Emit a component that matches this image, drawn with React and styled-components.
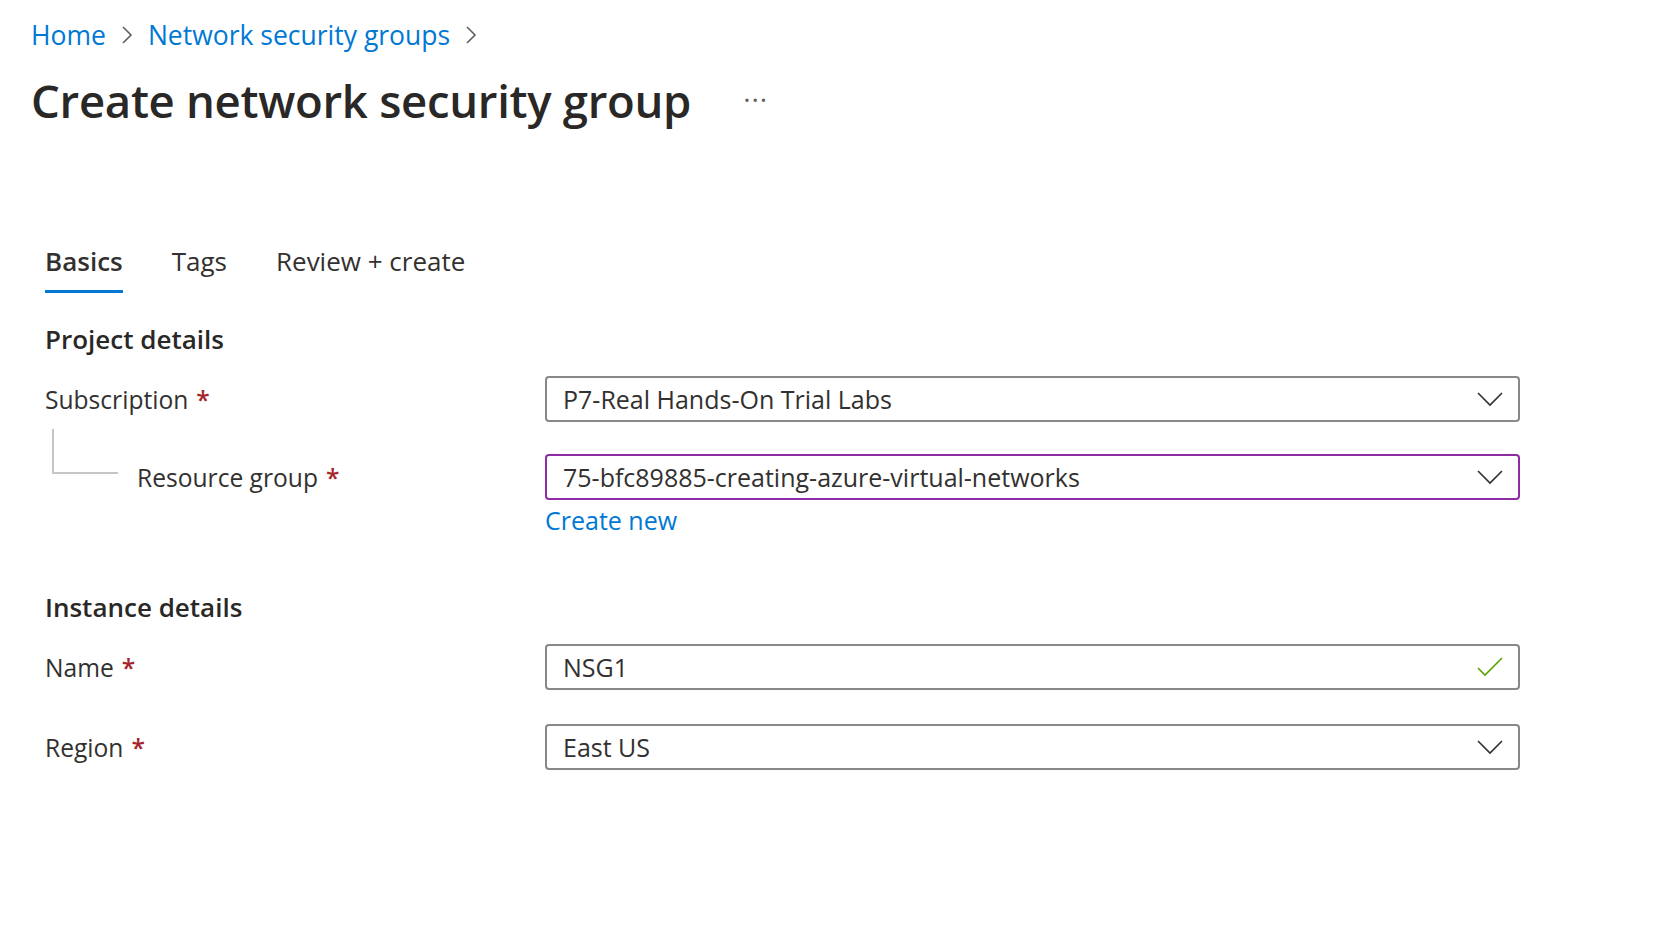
import React from "react";
import styled, { createGlobalStyle } from "styled-components";

const GlobalStyle = createGlobalStyle`
  html, body {
    margin: 0;
    padding: 0;
    background: #ffffff;
  }
  body {
    font-family: "Open Sans", "Noto Sans", sans-serif;
    color: #323130;
  }
`;

const Page = styled.div`
  padding: 17px 0 0 31px;
  width: 1661px;
  height: 934px;
  box-sizing: border-box;
`;

const Breadcrumb = styled.nav`
  display: flex;
  align-items: center;
  gap: 15px;
  height: 36px;
  font-size: 26.5px;
  line-height: 36px;
`;

const Crumb = styled.a`
  color: #0078d4;
  text-decoration: none;
`;

const Chevron = styled.svg`
  width: 12px;
  height: 20px;
  fill: none;
  stroke: #605e5c;
  stroke-width: 1.6;
`;

const TitleRow = styled.div`
  display: flex;
  align-items: center;
  margin-top: 19px;
  height: 56px;
`;

const Title = styled.h1`
  margin: 0;
  font-size: 45.5px;
  font-weight: 600;
  line-height: 56px;
  color: #292827;
  letter-spacing: -0.3px;
`;

const More = styled.span`
  margin-left: 52px;
  font-size: 28px;
  color: #605e5c;
  letter-spacing: 1px;
  margin-top: -2px;
`;

const Form = styled.div`
  padding-left: 14px;
`;

const Tabs = styled.div`
  display: flex;
  gap: 49px;
  margin-top: 115px;
`;

const Tab = styled.div`
  font-size: 26px;
  line-height: 36px;
  padding-bottom: 11px;
  font-weight: ${p => (p.active ? 600 : 400)};
  color: #323130;
  border-bottom: 3px solid ${p => (p.active ? "#0078d4" : "transparent")};
`;

const Section = styled.h2`
  margin: ${p => p.top}px 0 0;
  font-size: 26px;
  font-weight: 600;
  line-height: 36px;
  color: #292827;
`;

const Row = styled.div`
  display: flex;
  align-items: center;
  margin-top: ${p => p.top}px;
`;

const LabelCell = styled.div`
  width: 500px;
  display: flex;
  align-items: center;
  font-size: 24.6px;
  color: #323130;
  padding-left: ${p => p.indent || 0}px;
  box-sizing: border-box;
`;

const Connector = styled.div`
  align-self: flex-start;
  margin-top: -32px;
  width: 64px;
  height: 43px;
  border-left: 2px solid #c8c6c4;
  border-bottom: 2px solid #c8c6c4;
  margin-right: 19px;
`;

const Star = styled.span`
  color: #a4262c;
  margin-left: 8px;
  font-weight: 600;
`;

const Field = styled.div`
  width: 975px;
  height: 46px;
  box-sizing: border-box;
  border: 2px solid ${p => p.border || "#8a8886"};
  border-radius: 4px;
  display: flex;
  align-items: center;
  justify-content: space-between;
  padding: 0 14px 0 16px;
  font-size: 25px;
  color: #323130;
`;

const LinkRow = styled.div`
  margin-left: 500px;
  margin-top: 5px;
  font-size: 25px;
  line-height: 30px;
  color: #0078d4;
`;

const IconSvg = styled.svg`
  width: 28px;
  height: 16px;
  fill: none;
  stroke: ${p => p.color || "#323130"};
  stroke-width: 1.6;
`;

const ChevronRight = () => (
  <Chevron viewBox="0 0 12 20">
    <path d="M2 2 L10 10 L2 18" />
  </Chevron>
);

const DropIcon = () => (
  <IconSvg viewBox="0 0 28 16">
    <path d="M2 2 L14 14 L26 2" />
  </IconSvg>
);

const CheckIcon = () => (
  <IconSvg viewBox="0 0 28 22" color="#57a300" style={{ height: 22 }}>
    <path d="M2 12 L9 19 L26 2" />
  </IconSvg>
);

const App = () => {
  return (
    <>
      <GlobalStyle />
      <Page>
        <Breadcrumb>
          <Crumb>Home</Crumb>
          <ChevronRight />
          <Crumb>Network security groups</Crumb>
          <ChevronRight />
        </Breadcrumb>
        <TitleRow>
          <Title>Create network security group</Title>
          <More>···</More>
        </TitleRow>
        <Form>
          <Tabs>
            <Tab active>Basics</Tab>
            <Tab>Tags</Tab>
            <Tab>Review + create</Tab>
          </Tabs>

          <Section top={28}>Project details</Section>
          <Row top={19}>
            <LabelCell>
              Subscription<Star>*</Star>
            </LabelCell>
            <Field>
              P7-Real Hands-On Trial Labs
              <DropIcon />
            </Field>
          </Row>
          <Row top={32}>
            <LabelCell indent={7}>
              <Connector />
              Resource group<Star>*</Star>
            </LabelCell>
            <Field border="#8e2ca6">
              75-bfc89885-creating-azure-virtual-networks
              <DropIcon />
            </Field>
          </Row>
          <LinkRow>Create new</LinkRow>

          <Section top={54}>Instance details</Section>
          <Row top={19}>
            <LabelCell>
              Name<Star>*</Star>
            </LabelCell>
            <Field>
              NSG1
              <CheckIcon />
            </Field>
          </Row>
          <Row top={34}>
            <LabelCell>
              Region<Star>*</Star>
            </LabelCell>
            <Field>
              East US
              <DropIcon />
            </Field>
          </Row>
        </Form>
      </Page>
    </>
  );
};

export default App;
